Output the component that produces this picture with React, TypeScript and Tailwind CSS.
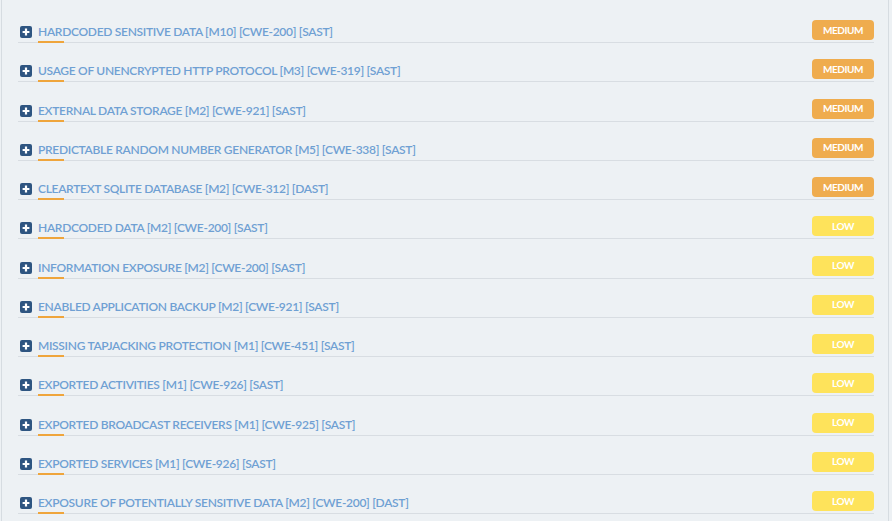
import React from 'react'

type Sev = 'MEDIUM' | 'LOW'

const ISSUES: { title: string; sev: Sev }[] = [
  { title: 'HARDCODED SENSITIVE DATA [M10] [CWE-200] [SAST]', sev: 'MEDIUM' },
  { title: 'USAGE OF UNENCRYPTED HTTP PROTOCOL [M3] [CWE-319] [SAST]', sev: 'MEDIUM' },
  { title: 'EXTERNAL DATA STORAGE [M2] [CWE-921] [SAST]', sev: 'MEDIUM' },
  { title: 'PREDICTABLE RANDOM NUMBER GENERATOR [M5] [CWE-338] [SAST]', sev: 'MEDIUM' },
  { title: 'CLEARTEXT SQLITE DATABASE [M2] [CWE-312] [DAST]', sev: 'MEDIUM' },
  { title: 'HARDCODED DATA [M2] [CWE-200] [SAST]', sev: 'LOW' },
  { title: 'INFORMATION EXPOSURE [M2] [CWE-200] [SAST]', sev: 'LOW' },
  { title: 'ENABLED APPLICATION BACKUP [M2] [CWE-921] [SAST]', sev: 'LOW' },
  { title: 'MISSING TAPJACKING PROTECTION [M1] [CWE-451] [SAST]', sev: 'LOW' },
  { title: 'EXPORTED ACTIVITIES [M1] [CWE-926] [SAST]', sev: 'LOW' },
  { title: 'EXPORTED BROADCAST RECEIVERS [M1] [CWE-925] [SAST]', sev: 'LOW' },
  { title: 'EXPORTED SERVICES [M1] [CWE-926] [SAST]', sev: 'LOW' },
  { title: 'EXPOSURE OF POTENTIALLY SENSITIVE DATA [M2] [CWE-200] [DAST]', sev: 'LOW' },
]

function PlusBox() {
  return (
    <svg width="12" height="12" viewBox="0 0 12 12" className="shrink-0">
      <rect x="0" y="0" width="12" height="12" rx="2" fill="#2e5581" />
      <path d="M6 2.6v6.8M2.6 6h6.8" stroke="#fff" strokeWidth="2.2" />
    </svg>
  )
}

function IssueRow({ title, sev }: { title: string; sev: Sev }) {
  return (
    <div className="relative h-[39.25px] flex items-end border-b border-[#d8dde2] pb-[2px]">
      <div className="flex items-center justify-between w-full h-5">
        <div className="flex items-center gap-[6px] pl-[2px] translate-y-[2px]">
          <PlusBox />
          <span className="text-[12px] font-semibold text-[#6fa0d3] tracking-[-0.3px]">{title}</span>
        </div>
        <span
          className={
            sev === 'MEDIUM'
              ? 'w-[62px] h-5 rounded-[4px] bg-[#efac4e] text-white text-[10px] font-bold flex items-center justify-center tracking-[-0.4px]'
              : 'w-[62px] h-5 rounded-[4px] bg-[#fee35b] text-white text-[10px] font-bold flex items-center justify-center tracking-[-0.4px]'
          }
        >
          {sev}
        </span>
      </div>
      <div className="absolute left-[20px] bottom-[-1px] w-[26px] h-[2px] bg-[#efa53c]" />
    </div>
  )
}

export default function App() {
  return (
    <div className="w-[892px] h-[521px] overflow-hidden bg-[#edf1f4]" style={{ fontFamily: 'Lato, "Open Sans", sans-serif' }}>
      <div className="h-full ml-[1px] mr-[3px] border-l border-r border-[#d6dce1] pl-[16px] pr-[14px] pt-[3.75px]">
        {ISSUES.map(i => (
          <IssueRow key={i.title} title={i.title} sev={i.sev} />
        ))}
      </div>
    </div>
  )
}
